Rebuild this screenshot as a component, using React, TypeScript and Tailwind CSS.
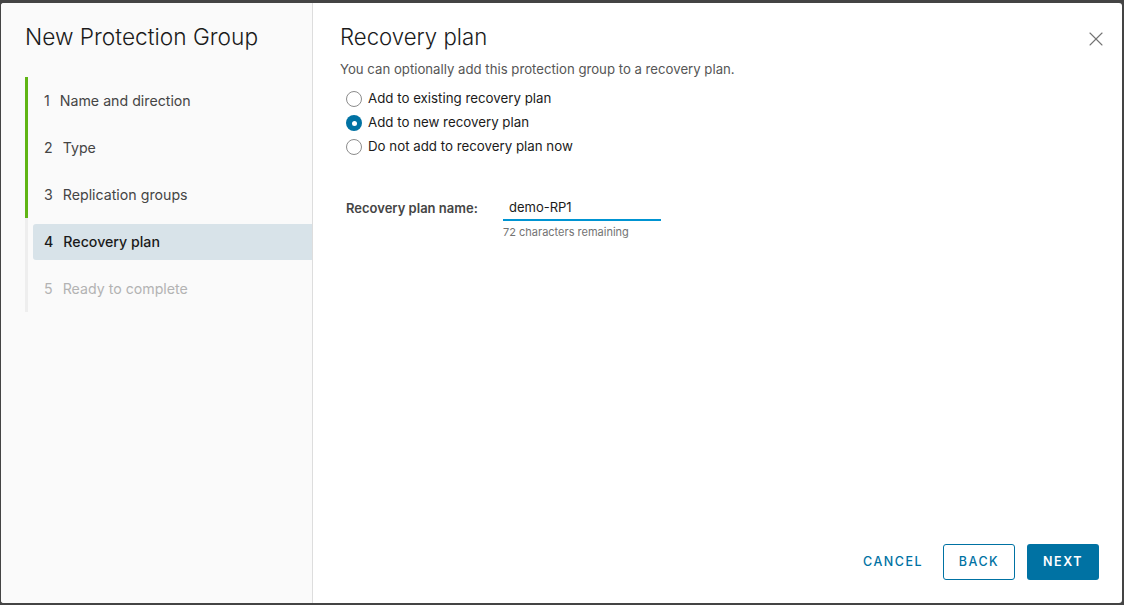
import { X } from 'lucide-react'

const steps = [
  { n: 1, label: 'Name and direction', state: 'done' },
  { n: 2, label: 'Type', state: 'done' },
  { n: 3, label: 'Replication groups', state: 'done' },
  { n: 4, label: 'Recovery plan', state: 'active' },
  { n: 5, label: 'Ready to complete', state: 'todo' },
]

const options = [
  { label: 'Add to existing recovery plan', checked: false },
  { label: 'Add to new recovery plan', checked: true },
  { label: 'Do not add to recovery plan now', checked: false },
]

function Radio({ checked }: { checked: boolean }) {
  return checked ? (
    <span className="flex h-4 w-4 items-center justify-center rounded-full bg-[#0072a3]">
      <span className="h-[5px] w-[5px] rounded-full bg-white" />
    </span>
  ) : (
    <span className="h-4 w-4 rounded-full border border-[#8c8c8c] bg-white" />
  )
}

export default function App() {
  return (
    <div
      className="h-[605px] w-[1124px] bg-[#444] pb-[2px] pl-[1px] pr-[2px] pt-[3px]"
      style={{ fontFamily: 'Inter, Lato, sans-serif' }}
    >
      <div className="flex h-full w-full overflow-hidden rounded-[3px] bg-white">
        {/* steps */}
        <aside className="flex w-[312px] shrink-0 flex-col border-r border-[#dddddd] bg-[#fafafa] pl-6">
          <h1 className="mt-[19px] text-[22.7px] font-light leading-[30px] text-[#1b1b1b]">New Protection Group</h1>
          <ol className="mt-[25px] flex flex-col">
            {steps.map((s) => (
              <li
                key={s.n}
                className={
                  'flex h-[47px] border-l-[3px] ' +
                  (s.state === 'done' ? 'border-[#60b515]' : 'border-[#eeeeee]')
                }
              >
                <div
                  className={
                    'ml-[5px] flex h-9 flex-1 items-center gap-[10px] self-center rounded-l-[3px] pl-[11px] text-[14.2px] ' +
                    (s.state === 'active'
                      ? 'bg-[#d8e3e9] font-medium text-[#1b1b1b]'
                      : s.state === 'done'
                        ? 'text-[#454545]'
                        : 'text-[#b3b3b3]')
                  }
                >
                  <span>{s.n}</span>
                  <span>{s.label}</span>
                </div>
              </li>
            ))}
          </ol>
        </aside>

        {/* content */}
        <main className="flex flex-1 flex-col pl-[27px] pr-[23px]">
          <div className="mt-[19px] flex items-start justify-between">
            <h2 className="text-[22.2px] font-light leading-[30px] text-[#1b1b1b]">Recovery plan</h2>
            <X size={24} strokeWidth={1.1} className="mr-[-9px] mt-[5px] text-[#737373]" />
          </div>
          <p className="mt-[8px] text-[13.2px] text-[#565656]">
            You can optionally add this protection group to a recovery plan.
          </p>
          <div className="mt-[11px] flex flex-col gap-[7px] pl-[6px]">
            {options.map((o) => (
              <label key={o.label} className="flex h-[17px] items-center gap-[6px] text-[13.3px] text-[#1b1b1b]">
                <Radio checked={o.checked} />
                <span>{o.label}</span>
              </label>
            ))}
          </div>

          <div className="mt-[42px] flex items-start pl-[6px]">
            <span className="mt-[1px] w-[157px] text-[13px] font-semibold text-[#454545]">Recovery plan name:</span>
            <div className="flex flex-col">
              <div className="w-[158px] border-b-2 border-[#0094d2] pb-[2px] pl-[6px] text-[13px] text-[#1b1b1b]">
                demo-RP1
              </div>
              <span className="mt-[3px] text-[11px] text-[#737373]">72 characters remaining</span>
            </div>
          </div>

          <div className="mt-auto mb-[23px] flex items-center justify-end gap-3">
            <button className="h-9 px-2 text-[12.5px] font-medium tracking-[1.5px] text-[#0072a3]">CANCEL</button>
            <button className="h-9 w-[72px] rounded-[3px] border border-[#0072a3] text-[12.5px] font-medium tracking-[1.5px] text-[#0072a3]">
              BACK
            </button>
            <button className="h-9 w-[72px] rounded-[3px] bg-[#0072a3] text-[12.5px] font-semibold tracking-[1.5px] text-white">
              NEXT
            </button>
          </div>
        </main>
      </div>
    </div>
  )
}
